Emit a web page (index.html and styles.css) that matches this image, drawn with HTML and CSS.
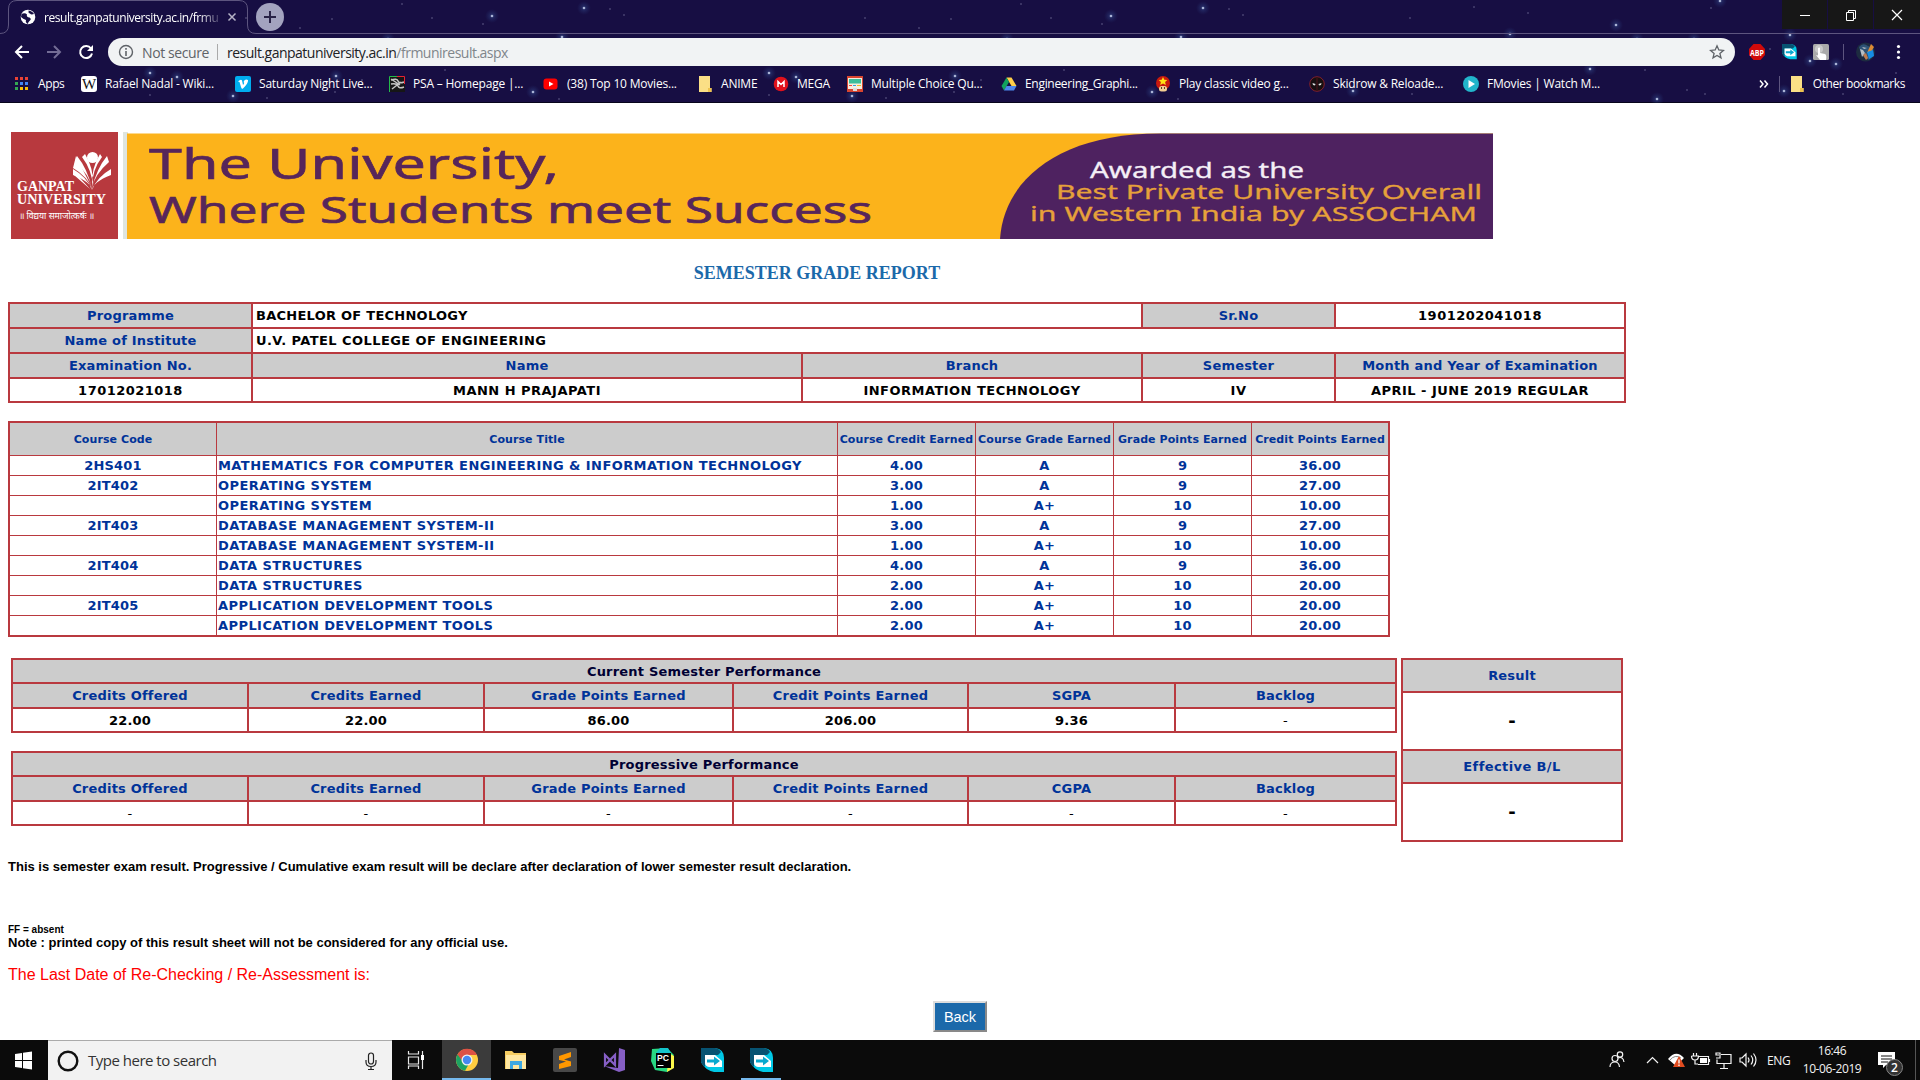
FILE: index.html
```html
<!DOCTYPE html>
<html lang="en">
<head>
<meta charset="utf-8">
<title>Semester Grade Report</title>
<link rel="stylesheet" href="styles.css">
</head>
<body>
<svg width="0" height="0" class="defs" aria-hidden="true">
  <defs>
    <radialGradient id="glow"><stop offset="0" stop-color="#4a72b8" stop-opacity=".4"/><stop offset="1" stop-color="#2a4a90" stop-opacity="0"/></radialGradient>
    <g id="star-l"><circle r="7" fill="url(#glow)"/><circle r="1.3" fill="#aab4d6"/></g>
    <g id="star-s"><circle r=".8" fill="#69648f"/></g>
    <g id="sky">
      <use href="#star-l" x="92" y="16"/><use href="#star-l" x="162" y="37"/><use href="#star-l" x="-12" y="39"/>
      <use href="#star-l" x="184" y="8"/><use href="#star-s" x="83" y="24"/><use href="#star-s" x="224" y="15"/>
      <use href="#star-s" x="210" y="9"/><use href="#star-s" x="-68" y="19"/><use href="#star-s" x="-100" y="28"/>
      <use href="#star-s" x="32" y="18"/><use href="#star-s" x="2" y="4"/><use href="#star-s" x="-154" y="18"/>
      <use href="#star-l" x="-250" y="73"/><use href="#star-l" x="-223" y="77"/><use href="#star-l" x="-64" y="76"/>
      <use href="#star-l" x="-167" y="96"/><use href="#star-s" x="-133" y="98"/><use href="#star-s" x="-250" y="95"/>
      <use href="#star-s" x="-65" y="92"/><use href="#star-s" x="45" y="70"/><use href="#star-l" x="133" y="92"/>
      <use href="#star-s" x="159" y="99"/><use href="#star-s" x="-38" y="80"/>
    </g>
    <g id="folder"><path d="M0 0h11v12h1.500v4H0z" fill="#fbdf86"/><path d="M9 12h3.500v4H9z" fill="#eec24e"/></g>
    <g id="arrow-app"><path d="M0 0h14q9 1 9 10v14H13Q4 22 0 14z" fill="#00c8e6"/><path d="M0 0h14q4 .5 6 4L17 7H4v12Q1 17 0 14z" fill="#075372"/><path d="M4 7h10l7 6v6H8q-4-1-4-4z" fill="#fff"/><path d="M6 11.500h7V8.500l6 4.500-6 4.500v-3H6z" fill="#08a9cf"/></g>
  </defs>
</svg>

<header class="browser">
  <svg class="sky" width="1920" height="103" aria-hidden="true">
    <use href="#sky" x="400"/><use href="#sky" x="1019"/>
    <use href="#star-l" x="1510" y="34"/><use href="#star-l" x="1616" y="25"/><use href="#star-l" x="1637" y="39"/><use href="#star-l" x="1694" y="39"/>
    <use href="#star-l" x="1720" y="1"/><use href="#star-s" x="1711" y="8"/><use href="#star-l" x="1790" y="35"/><use href="#star-l" x="1810" y="61"/>
    <use href="#star-l" x="1836" y="64"/><use href="#star-l" x="1657" y="99"/><use href="#star-s" x="1687" y="90"/><use href="#star-s" x="1705" y="94"/>
    <use href="#star-s" x="1843" y="94"/><use href="#star-l" x="1784" y="91"/><use href="#star-l" x="1590" y="69"/><use href="#star-s" x="1645" y="70"/>
    <use href="#star-s" x="1474" y="7"/><use href="#star-s" x="1528" y="13"/><use href="#star-s" x="1410" y="18"/><use href="#star-s" x="1770" y="49"/>
    <use href="#star-l" x="1353" y="91"/><use href="#star-s" x="1412" y="94"/><use href="#star-s" x="1896" y="73"/>
    <path d="M0 33.500Q8.500 33.500 8.500 25V9Q8.500.5 17 .5H239Q247.500.5 247.500 9V25Q247.500 33.500 256 33.500H1920" fill="none" stroke="#5d557f"/>
  </svg>

  <div class="tabs">
    <svg class="globe" width="16" height="16"><circle cx="8" cy="8" r="7.300" fill="#fff"/><path d="M1.500 5Q5 3.500 7 5.500Q6 8 9.500 8.500Q12 10 9.500 12Q8 13 8 15Q5 13.500 6 11Q3 10 1 8zM8.500 1.500Q8 4 10 4.500Q11 6 14 5Q12.500 2 8.500 1.500z" fill="#170e43"/></svg>
    <span class="tab-title">result.ganpatuniversity.ac.in/frmu</span>
    <svg class="tab-close" width="10" height="10" viewBox="0 0 10 10"><path d="M1.500 1.500l7 7m0-7l-7 7" stroke="#b6b3c7" stroke-width="1.500"/></svg>
    <span class="new-tab"><svg width="14" height="14"><path d="M7 1v12M1 7h12" stroke="#292347" stroke-width="2"/></svg></span>
    <div class="win">
      <span><svg width="12" height="12"><path d="M1 6.500h10" stroke="#fff"/></svg></span>
      <span><svg width="12" height="12"><path d="M1.500 3.500h7v8h-7zM3.500 3V1.500h7v8H9" fill="none" stroke="#fff"/></svg></span>
      <span><svg width="12" height="12"><path d="M1 1l10 10M11 1L1 11" stroke="#fff" stroke-width="1.200"/></svg></span>
    </div>
  </div>

  <div class="toolbar">
    <svg class="nav" width="96" height="28"><g fill="none" stroke="#fff" stroke-width="2"><path d="M21 14H8M14 8l-6 6 6 6" transform="translate(8)"/><path d="M47 14h13M54 8l6 6-6 6" stroke="#736c95"/><path d="M91 10.500A6 6 0 1 0 92 15.500"/></g><path d="M93 7v6h-6z" fill="#fff"/></svg>
    <div class="omnibox">
      <svg width="16" height="16"><circle cx="8" cy="8" r="6.500" fill="none" stroke="#5f6368" stroke-width="1.400"/><path d="M8 7v5M8 4v1.700" stroke="#5f6368" stroke-width="1.600"/></svg>
      <span class="insecure">Not secure</span><i class="bar"></i><span class="url">result.ganpatuniversity.ac.in<b>/frmuniresult.aspx</b></span>
      <svg class="fav" width="16" height="16"><path d="M8 1.800l1.800 4.200 4.600.4-3.500 3 1.100 4.500-4-2.400-4 2.400 1.100-4.500-3.500-3 4.600-.4z" fill="none" stroke="#5f6368" stroke-width="1.300"/></svg>
    </div>
    <svg class="ext" width="185" height="28"><path d="M18.500 6h7l4.500 5v6l-4.500 5h-7L14 17v-6z" fill="#d00a0a"/><text x="15" y="17.500" textLength="14" lengthAdjust="spacingAndGlyphs" font-family="Open Sans, sans-serif" font-size="9" font-weight="700" fill="#fff">ABP</text>
      <use href="#arrow-app" transform="translate(47 6) scale(.64)"/>
      <rect x="78" y="6" width="16" height="16" rx="1.500" fill="#aaa"/><circle cx="84" cy="11" r="4" fill="#c9c9c9"/><path d="M83 10q1.500-1 2 0v5l5 1q2 1 1 6h-6l-4-5 2 .5z" fill="#fff"/>
      <path d="M108.500 6v16" stroke="#5d557f"/><circle cx="130.500" cy="14" r="9.500" fill="#1d2b40"/><path d="M124 9q4-5 9-1l5 2 1 7-5 5q-6-2-8-7z" fill="#2d5276"/><path d="M136 6l3 3-3 5-4 1z" fill="#dd8b34"/><path d="M125 11l3 1 2 3-3 4zM127 9l5 1-3 1z" fill="#b7bec3"/><path d="M132 14l6-2 1 6-5 3z" fill="#168ce4"/><path d="M128 17l3-2 2 5-2 2z" fill="#c17b4b"/>
      <g fill="#fff"><circle cx="163.500" cy="8.500" r="1.600"/><circle cx="163.500" cy="14" r="1.600"/><circle cx="163.500" cy="19.500" r="1.600"/></g></svg>
  </div>

  <nav class="bookmarks">
    <a class="w66"><svg width="16" height="16"><g fill="#ea4335"><path d="M1 1h3v3H1zM6 1h3v3H6zM11 1h3v3h-3z"/></g><path d="M1 6h3v3H1zM1 11h3v3H1z" fill="#34a853"/><path d="M6 6h3v3H6zM11 6h3v3h-3z" fill="#4285f4"/><path d="M6 11h3v3H6zM11 11h3v3h-3z" fill="#fbbc05"/></svg><span>Apps</span></a>
    <a class="w154"><svg width="16" height="16"><rect width="16" height="16" rx="3" fill="#fff"/><text x="1" y="12.500" textLength="14" lengthAdjust="spacingAndGlyphs" font-family="Liberation Serif, serif" font-size="14" fill="#111">W</text></svg><span>Rafael Nadal - Wiki...</span></a>
    <a class="w154"><svg width="16" height="16"><rect width="16" height="16" rx="2" fill="#00adef"/><path d="M3 5.500Q6 2.500 7 4.500L8 9Q10 6.500 8.500 6 10 2.500 13 4 13.500 7 8 12.500 6.500 13.500 6 11L4.500 6z" fill="#fff"/></svg><span>Saturday Night Live...</span></a>
    <a class="w154"><svg width="16" height="16"><rect width="16" height="16" fill="#161616"/><path d="M2 4q6-2 7 1t6 1M2 8q6-1 7 2t6 1M3 13l9-7M2 3l9 6" fill="none" stroke="#c4c4c4" stroke-width="1.500"/><path d="M.5 16V.5H8" fill="none" stroke="#24b94b"/><path d="M8 .5h7.500V8" fill="none" stroke="#e42332"/></svg><span>PSA – Homepage |...</span></a>
    <a class="w154"><svg width="16" height="16"><rect x=".5" y="2.500" width="14" height="11" rx="3" fill="#f00"/><path d="M6 5.500l4.500 2.500L6 10.500z" fill="#fff"/></svg><span>(38) Top 10 Movies...</span></a>
    <a class="w76"><svg width="16" height="16"><use href="#folder" x="2"/></svg><span>ANIME</span></a>
    <a class="w74"><svg width="16" height="16"><circle cx="8" cy="8" r="7.300" fill="#e0111b"/><path d="M5 11V5.500L8 8.500l3-3V11" fill="none" stroke="#fff" stroke-width="1.500"/></svg><span>MEGA</span></a>
    <a class="w154"><svg width="16" height="16"><rect width="16" height="16" fill="#d8452f"/><path d="M1 2h14v11H1z" fill="#f6eee0"/><path d="M2 3h12v4.500H2z" fill="#3cbd99"/><path d="M2 9h3v1H2z" fill="#e44"/><path d="M6 9h3v1H6z" fill="#32a0dc"/><path d="M10 9h4v1h-4z" fill="#f0bc20"/><path d="M6 12h4v3H6z" fill="#ddd"/></svg><span>Multiple Choice Qu...</span></a>
    <a class="w154"><svg width="16" height="16"><path d="M5.500 1.500h5L15.500 10h-5z" fill="#ffcf48"/><path d="M5.500 1.500L.5 10 3 14.500 8 6z" fill="#11a15e"/><path d="M5.500 10h10L13 14.500H3z" fill="#4c87ed"/></svg><span class="narrow">Engineering_Graphi...</span></a>
    <a class="w154"><svg width="16" height="16"><circle cx="8" cy="7" r="7" fill="#c9190d"/><path d="M8 1l1.300 2.800 3 .3-2.200 2 .7 3L8 7.500 5.200 9l.7-3-2.200-2 3-.2z" fill="#ffe113"/><rect x="4" y="10" width="8" height="5.500" rx="2.500" fill="#f3ce91"/><path d="M6.500 11v2M9.500 11v2" stroke="#542"/></svg><span>Play classic video g...</span></a>
    <a class="w154"><svg width="16" height="16"><circle cx="8" cy="8" r="7.300" fill="#171011" stroke="#83202b"/><path d="M3.500 7l3 1-.5 1.500-2-.5zM12.500 7l-3 1 .5 1.500 2-.5z" fill="#ddd"/><path d="M8 2v12" stroke="#4e121b"/></svg><span>Skidrow &amp; Reloade...</span></a>
    <a class="w154"><svg width="16" height="16"><circle cx="8" cy="8" r="8" fill="#22b5cb"/><path d="M5.500 4l6.500 4-6.500 4z" fill="#fff"/></svg><span>FMovies | Watch M...</span></a>
    <a class="other"><svg width="34" height="16"><path d="M5 4.500l3 3.500-3 3.500M9.500 4.500l3 3.500-3 3.500" fill="none" stroke="#fff" stroke-width="1.500"/><path d="M24.500 0v16" stroke="#5d557f"/></svg><svg width="16" height="16"><use href="#folder" x="2"/></svg><span>Other bookmarks</span></a>
  </nav>
</header>

<main>
  <div class="masthead">
    <svg class="logo" width="107" height="107">
      <rect width="107" height="107" fill="#b8393e"/>
      <g fill="#fff"><circle cx="81.500" cy="25.500" r="5.500"/><path d="M62 38L79 57 63 43zM65 24l17 34Q76 44 62 36z"/><path d="M62 37q14 8 19 21Q80 50 62 43zM64 30q14 12 17 26Q76 36 66 24zM71 25q10 13 11 30Q83 36 74 22zM100 37q-14 8-19 21 1-8 19-15zM98 30Q84 42 81 56q5-20 15-32zM91 25Q81 38 81 55q-1-19 8-33z"/>
      <text x="6" y="59" textLength="57" lengthAdjust="spacingAndGlyphs" class="logo-name">GANPAT</text><text x="6" y="72" textLength="89" lengthAdjust="spacingAndGlyphs" class="logo-name">UNIVERSITY</text><text x="8" y="87" textLength="75" lengthAdjust="spacingAndGlyphs" class="motto">॥ विद्यया समाजोत्कर्षः ॥</text></g>
    </svg>
    <svg class="banner" width="1370" height="107">
      <rect width="5" height="107" fill="#dfe5df"/><rect x="4" y="1.500" width="1366" height="105.500" fill="#fcb31b"/>
      <path d="M877 107C881 47 937 1.500 1037 1.500H1370V107z" fill="#4e2260"/>
      <g fill="#57265a" stroke="#57265a" stroke-width=".6"><text x="26" y="47" textLength="410" lengthAdjust="spacingAndGlyphs" font-size="41">The University,</text>
      <text x="26" y="91" textLength="723" lengthAdjust="spacingAndGlyphs" font-size="36">Where Students meet Success</text></g>
      <text x="967" y="45.500" textLength="214" lengthAdjust="spacingAndGlyphs" font-size="21.500" fill="#f4eff6" stroke="#f4eff6" stroke-width=".3">Awarded as the</text>
      <g fill="#e6a13a" stroke="#e6a13a" stroke-width=".3"><text x="933" y="67" textLength="426" lengthAdjust="spacingAndGlyphs" font-size="20.500">Best Private University Overall</text>
      <text x="907" y="89" textLength="447" lengthAdjust="spacingAndGlyphs" font-size="20.500">in Western India by ASSOCHAM</text></g>
    </svg>
  </div>

  <h1>SEMESTER GRADE REPORT</h1>

  <section class="grid info">
    <div class="h">Programme</div><div class="l span2 tight">BACHELOR OF TECHNOLOGY</div><div class="h">Sr.No</div><div>1901202041018</div>
    <div class="h">Name of Institute</div><div class="l span4">U.V. PATEL COLLEGE OF ENGINEERING</div>
    <div class="h">Examination No.</div><div class="h">Name</div><div class="h">Branch</div><div class="h">Semester</div><div class="h">Month and Year of Examination</div>
    <div class="v">17012021018</div><div class="v">MANN H PRAJAPATI</div><div class="v">INFORMATION TECHNOLOGY</div><div class="v">IV</div><div class="v">APRIL - JUNE 2019 REGULAR</div>
  </section>

  <section class="grid courses">
    <div class="h">Course Code</div><div class="h">Course Title</div><div class="h">Course Credit Earned</div><div class="h">Course Grade Earned</div><div class="h">Grade Points Earned</div><div class="h">Credit Points Earned</div>
    <div>2HS401</div><div class="l">MATHEMATICS FOR COMPUTER ENGINEERING &amp; INFORMATION TECHNOLOGY</div><div>4.00</div><div>A</div><div>9</div><div>36.00</div>
    <div>2IT402</div><div class="l">OPERATING SYSTEM</div><div>3.00</div><div>A</div><div>9</div><div>27.00</div>
    <div></div><div class="l">OPERATING SYSTEM</div><div>1.00</div><div>A+</div><div>10</div><div>10.00</div>
    <div>2IT403</div><div class="l">DATABASE MANAGEMENT SYSTEM-II</div><div>3.00</div><div>A</div><div>9</div><div>27.00</div>
    <div></div><div class="l">DATABASE MANAGEMENT SYSTEM-II</div><div>1.00</div><div>A+</div><div>10</div><div>10.00</div>
    <div>2IT404</div><div class="l">DATA STRUCTURES</div><div>4.00</div><div>A</div><div>9</div><div>36.00</div>
    <div></div><div class="l">DATA STRUCTURES</div><div>2.00</div><div>A+</div><div>10</div><div>20.00</div>
    <div>2IT405</div><div class="l">APPLICATION DEVELOPMENT TOOLS</div><div>2.00</div><div>A+</div><div>10</div><div>20.00</div>
    <div></div><div class="l">APPLICATION DEVELOPMENT TOOLS</div><div>2.00</div><div>A+</div><div>10</div><div>20.00</div>
  </section>

  <div class="performance">
    <div class="perf-left">
      <section class="grid perf">
        <div class="cap">Current Semester Performance</div>
        <div class="h">Credits Offered</div><div class="h">Credits Earned</div><div class="h">Grade Points Earned</div><div class="h">Credit Points Earned</div><div class="h">SGPA</div><div class="h">Backlog</div>
        <div class="v">22.00</div><div class="v">22.00</div><div class="v">86.00</div><div class="v">206.00</div><div class="v">9.36</div><div class="n">-</div>
      </section>
      <section class="grid perf">
        <div class="cap">Progressive Performance</div>
        <div class="h">Credits Offered</div><div class="h">Credits Earned</div><div class="h">Grade Points Earned</div><div class="h">Credit Points Earned</div><div class="h">CGPA</div><div class="h">Backlog</div>
        <div class="n">-</div><div class="n">-</div><div class="n">-</div><div class="n">-</div><div class="n">-</div><div class="n">-</div>
      </section>
    </div>
    <section class="grid result">
      <div class="h">Result</div><div class="big">-</div><div class="h wide">Effective B/L</div><div class="big">-</div>
    </section>
  </div>

  <p class="note first">This is semester exam result. Progressive / Cumulative exam result will be declare after declaration of lower semester result declaration.</p>
  <p class="note small">FF = absent</p>
  <p class="note">Note : printed copy of this result sheet will not be considered for any official use.</p>
  <p class="recheck">The Last Date of Re-Checking / Re-Assessment is:</p>
  <button class="back">Back</button>
</main>

<footer class="taskbar">
  <svg class="start" width="48" height="40"><path d="M15 14l7-1v7h-7zM23 12.800l9-1.300V20h-9zM15 21h7v7l-7-1zM23 21h9v8.500l-9-1.300z" fill="#fff"/></svg>
  <div class="search">
    <svg width="22" height="22"><circle cx="11" cy="11" r="9.300" fill="none" stroke="#111" stroke-width="2.400"/></svg>
    <span>Type here to search</span>
    <svg width="14" height="20"><g fill="none" stroke="#222" stroke-width="1.200"><rect x="4.500" y="2" width="5" height="11" rx="2.500"/><path d="M2 9v2q0 4.500 5 4.500t5-4.500V9M7 15.500V18M4 18.500h6"/></g></svg>
  </div>
  <svg class="task" width="50" height="40"><g fill="none" stroke="#e8e8e8" stroke-width="1.200"><path d="M16.500 11v3h10v-3M16.500 17h10v7h-10zM16.500 29v-3h10v3M30.500 11v18"/></g><path d="M29 15h3v5h-3z" fill="#fff"/></svg>
  <span class="app on"><svg width="24" height="24"><circle cx="12" cy="12" r="11" fill="#ffcd40"/><path d="M12 12L2.500 6.500a11 11 0 0 0 7.500 16.300L15 14z" fill="#1da362"/><path d="M2.500 6.500a11 11 0 0 1 19.500.5H12L8 14z" fill="#dd5144"/><circle cx="12" cy="12" r="5.500" fill="#f1f1f1"/><circle cx="12" cy="12" r="4.200" fill="#4688f1"/></svg></span>
  <span class="app"><svg width="24" height="24"><path d="M1 3h7l2 2h12v16H1z" fill="#f6cd61"/><path d="M2 7h20v14H2z" fill="#ffe7a0"/><path d="M6 21v-8h12v8h-3v-4H9v4z" fill="#3fa9e2"/></svg></span>
  <span class="app"><svg width="24" height="24"><rect width="24" height="24" rx="2" fill="#484848"/><path d="M6 8l12-4v5l-7 2.500 7 2v4.500L6 21v-5l7-2.500L6 12z" fill="#ff9800"/></svg></span>
  <span class="app"><svg width="24" height="24"><path d="M17 0l6 2v20l-6 2-15-6 14 2z" fill="#865fc5"/><path d="M3 7l10 10V7L3 17z" fill="none" stroke="#865fc5" stroke-width="2.200"/></svg></span>
  <span class="app"><svg width="24" height="24"><path d="M1 1l15-1 7 7-3 4 3 8-7 5-12-2-4-9z" fill="#28d782"/><path d="M18 5l5 3v12l-7 4z" fill="#fcf84a"/><path d="M9 0h8l3 5H5z" fill="#14c5cc"/><rect x="5" y="5" width="15" height="15" fill="#000"/><text x="6" y="13" textLength="12" lengthAdjust="spacingAndGlyphs" font-family="Liberation Sans, sans-serif" font-size="9" font-weight="700" fill="#fff">PC</text><path d="M6.500 17.500h6" stroke="#fff"/></svg></span>
  <span class="app"><svg width="24" height="24"><use href="#arrow-app" x="1"/></svg></span>
  <span class="app run"><svg width="24" height="24"><use href="#arrow-app" x="1"/></svg></span>
  <svg class="tray" width="160" height="40"><g fill="none" stroke="#f3f3f3" stroke-width="1.200">
    <circle cx="13" cy="18.500" r="3"/><circle cx="18" cy="14.500" r="2.700"/><path d="M8 27q0-5 5-5 4 0 4.500 5M16 18q5-2 6 4"/><path d="M45 23l5.500-5.500 5.500 5.500"/>
    <path d="M96 16.500h10.500v8H96M107.500 19v3M91.500 13v3M94.500 13v3M89.500 16h7q0 4-3.500 4t-3.500-4M93 20v4h3"/><path d="M117 15h-3v-2h4v5h-4M119 14.500h10v9h-14v-4M122 24v4M118 28.500h8"/>
    <path d="M138 18h2l4-4v12l-4-4h-2zM146 17.500q2 2.500 0 5M149 15.500q3.500 4.500 0 9M151.500 13.500q5 6.500 0 13"/></g><path d="M98 18h7v5h-7z" fill="#fff"/>
    <path d="M66 19Q74 9 82 18L74 26z" fill="#fff"/><path d="M68 20Q73 14 79 18" fill="none" stroke="#888"/><path d="M77 16l6 11H71z" fill="#e04b1f"/><path d="M77 19.500v4m0 1v1.500" stroke="#fff" stroke-width="1.300"/></svg>
  <span class="lang">ENG</span>
  <span class="clock"><span>16:46</span><span>10-06-2019</span></span>
  <svg class="notice" width="46" height="40"><path d="M4 12h17v13h-9l-3 3v-3H4z" fill="#fff"/><path d="M7 16h11M7 19h11M7 22h7" stroke="#111"/><circle cx="20.500" cy="27.500" r="8" fill="#333" stroke="#858585"/><text x="17" y="32" font-family="Open Sans, sans-serif" font-size="12" font-weight="600" fill="#fff">2</text><path d="M41.500 0v40" stroke="#555"/></svg>
</footer>
</body>
</html>
```
FILE: styles.css
```css
* { box-sizing: border-box; }
body { margin: 0; width: 1920px; height: 1080px; overflow: hidden; background: #fff; display: flex; flex-direction: column; font-family: "Liberation Sans", sans-serif; }
.defs { position: absolute; }
svg { flex: none; display: block; }

.browser { position: relative; flex: none; height: 103px; background: #170e43; border-bottom: 1px solid #08051c; color: #fff; font: 12px "Open Sans", "Noto Sans", sans-serif; }
.sky { position: absolute; inset: 0; }
.tabs, .toolbar, .bookmarks { position: relative; display: flex; align-items: center; white-space: nowrap; }
.tabs { height: 34px; padding-left: 20px; }
.tab-title { width: 176px; margin-left: 8px; overflow: hidden; letter-spacing: -.44px; -webkit-mask-image: linear-gradient(90deg, #000 155px, transparent 180px); mask-image: linear-gradient(90deg, #000 155px, transparent 180px); }
.tab-close { margin-left: 7px; }
.new-tab { width: 28px; height: 28px; margin-left: 19px; border-radius: 50%; background: #a3a3bf; display: grid; place-items: center; }
.win { display: flex; gap: 1px; margin-left: auto; align-self: flex-start; }
.win span { width: 45px; height: 29px; background: #171717; display: grid; place-items: center; }
.win span:last-child { width: 46px; }
.toolbar { height: 36px; }
.nav { margin-right: 12px; }
.omnibox { width: 1627px; height: 28px; border-radius: 14px; background: #f1f3f4; display: flex; align-items: center; padding: 0 10px; font-size: 14px; color: #202124; }
.insecure { width: 67px; margin-left: 8px; color: #5f6368; letter-spacing: -.4px; }
.bar { width: 1px; height: 16px; margin: 0 9px 0 8px; background: #aaa; }
.url { letter-spacing: -.5px; }
.url b { font-weight: 400; color: #80868b; }
.fav { margin-left: auto; }
.bookmarks { height: 28px; padding-left: 14px; }
.bookmarks a { display: flex; align-items: center; gap: 8px; flex: none; letter-spacing: -.2px; }
.bookmarks span { padding-bottom: 1px; }
.bookmarks .narrow { letter-spacing: -.3px; }
.bookmarks .w66 { width: 67px; letter-spacing: -.4px; }
.w154 { width: 154px; }
.w76 { width: 76px; }
.w74 { width: 74px; }
.bookmarks .other { margin-left: auto; padding-right: 15px; letter-spacing: -.42px; }
.bookmarks .other svg + svg { margin-left: -8px; }

main { flex: none; height: 937px; padding-left: 8px; }
.masthead { display: flex; gap: 5px; padding: 29px 0 0 3px; }
.logo-name { font: 700 15px "Liberation Serif", serif; }
.motto { font: 9px "Noto Sans", sans-serif; }
.banner { font-family: "Noto Sans", "Open Sans", sans-serif; }
h1 { width: 1618px; margin: 24px 0 19px; font: bold 18px/20px "Liberation Serif", serif; color: #1b69aa; text-align: center; }

.grid { display: grid; gap: 2px; padding: 2px; background: #b9393f; font: bold 13px/1 "DejaVu Sans", sans-serif; letter-spacing: .2px; color: #000; }
.grid > div { background: #fff; display: flex; align-items: center; justify-content: center; white-space: nowrap; overflow: hidden; }
.grid > .h { background: #ccc; color: #039; }
.grid > .l { justify-content: flex-start; padding-left: 3px; letter-spacing: .43px; }
.grid > .tight { letter-spacing: .26px; }
.grid > .wide { letter-spacing: .4px; }
.span2 { grid-column: span 2; }
.span4 { grid-column: span 4; }
.info { width: 1618px; grid-template-columns: 241px 548px 338px 191px 288px; grid-template-rows: 23px 23px 23px 22px; }
.info > :not(.h, .l) { letter-spacing: .48px; }
.courses { width: 1382px; margin-top: 18px; gap: 1px; grid-template-columns: 206px 620px 137px 137px 137px 136px; grid-template-rows: 32px repeat(9, 19px); }
.grid.courses > div { color: #039; }
.grid.courses > .h { font-size: 11px; letter-spacing: .08px; }
.grid.courses > .l { padding-left: 1px; }
.performance { display: flex; gap: 4px; margin: 21px 0 0 3px; }
.perf-left { display: flex; flex-direction: column; gap: 18px; }
.perf { width: 1386px; grid-template-columns: 234px 234px 247px 233px 205px 219px; grid-template-rows: 22px 23px 22px; }
.grid > .cap { grid-column: 1 / -1; background: #ccc; color: #003; }
.grid > .n { font-weight: 400; }
.result { width: 222px; grid-template-rows: 31px 56px 31px 56px; }
.grid > .big { font-size: 18px; }

.note { margin: 0; font-weight: bold; font-size: 13px; line-height: 15px; }
.first { margin: 17px 0 50px; }
.small { font-size: 10px; line-height: 11px; }
.recheck { margin: 14px 0 0; font-size: 16px; line-height: 22px; color: red; }
.back { display: block; width: 54px; height: 31px; margin: 15px 0 0 925px; padding: 0; background: #1b69aa; color: #fff; border: 2px outset #ddd; font: 14.500px "Liberation Sans", sans-serif; }

.taskbar { flex: none; height: 40px; background: #0b0b0b; color: #f3f3f3; display: flex; align-items: center; font: 12px "Open Sans", "Noto Sans", sans-serif; white-space: nowrap; }
.search { width: 344px; height: 40px; border-top: 1px solid #aaa; background: #f2f2f2; color: #333; display: flex; align-items: center; padding: 0 14px 0 9px; font-size: 15px; letter-spacing: -.5px; }
.search span { margin: 0 auto 0 9px; padding-bottom: 2px; }
.app { width: 49px; height: 40px; display: grid; place-items: center; }
.app svg { margin-top: -1px; }
.on { background: #3b3b3b; box-shadow: inset 0 -2px #76b9ed; }
.run { background: linear-gradient(#76b9ed, #76b9ed) 50% 100% / 40px 2px no-repeat; }
.tray { margin-left: auto; }
.lang { width: 24px; margin-left: 5px; letter-spacing: -.3px; }
.clock { width: 70px; margin: 0 7px 0 6px; display: flex; flex-direction: column; align-items: center; line-height: 18px; letter-spacing: -.4px; }
```
